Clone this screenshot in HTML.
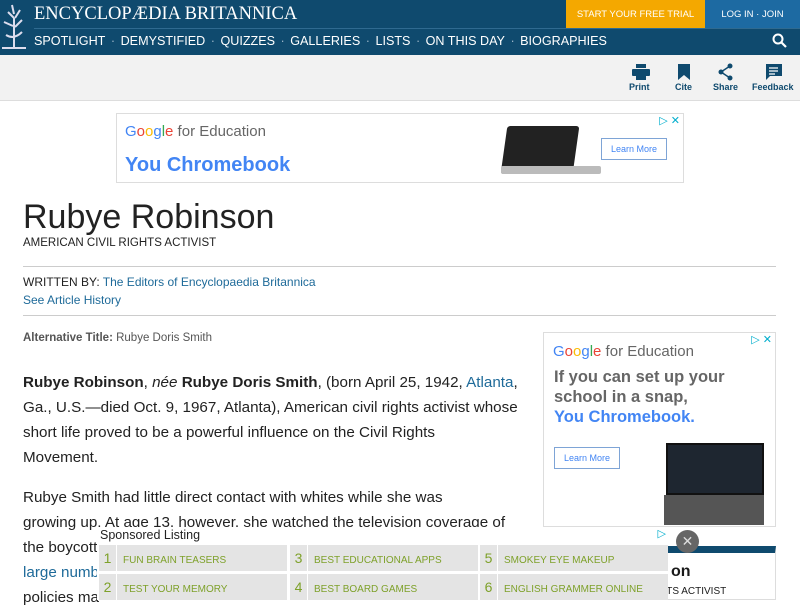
<!DOCTYPE html>
<html><head><meta charset="utf-8"><style>
*{margin:0;padding:0;box-sizing:border-box}
body{width:800px;height:600px;overflow:hidden;background:#fff;font-family:"Liberation Sans",sans-serif;position:relative;color:#1a1a1a}
.hdr{position:absolute;left:0;top:0;width:800px;height:55px;background:#0f4a6e}
.logo{position:absolute;left:34px;top:4px;color:#fff;font-family:"Liberation Serif",serif;font-size:18.5px;letter-spacing:0}
.trial{position:absolute;left:566px;top:0;width:139px;height:28px;background:#f4a800;color:#fff;font-size:9.5px;text-align:center;line-height:29px}
.login{position:absolute;left:705px;top:0;width:95px;height:28px;background:#1d6aa2;color:#fff;font-size:9.5px;text-align:center;line-height:29px}
.line{position:absolute;left:34px;top:28px;width:766px;height:1px;background:#2f6a90}
.nav{position:absolute;left:34px;top:34px;color:#fff;font-size:12.6px;white-space:nowrap}
.nav span{color:#9bb4c6;margin:0 5.5px}
.tool{position:absolute;left:0;top:55px;width:800px;height:46px;background:#f2f2f2;border-bottom:1px solid #ddd}
.ti{position:absolute;top:82px;font-size:9px;font-weight:bold;color:#0f4a6e;text-align:center}
.ad1{position:absolute;left:116px;top:113px;width:568px;height:70px;border:1px solid #ddd}
.g{font-size:15px;color:#666}
h1{position:absolute;left:23px;top:198px;font-size:34px;font-weight:normal;color:#222}
.sub{position:absolute;left:23px;top:237px;font-size:11.5px;color:#222}
.hr{position:absolute;left:23px;width:753px;height:1px;background:#ccc}
.p{position:absolute;left:23px;font-size:15.2px;line-height:25px;color:#222;white-space:nowrap;letter-spacing:0}
a{color:#1e6a99}
.ad2{position:absolute;left:543px;top:332px;width:233px;height:195px;border:1px solid #ddd;background:#fff}
.sp{position:absolute;left:97px;top:527px;width:571px;height:73px;background:#fff}
.cell{position:absolute;width:188px;height:26px;background:#e4e4e4;font-size:10px;color:#7ea12a;line-height:26px}
.cell i{font-style:normal;display:inline-block;width:18px;text-align:center;font-size:14px;border-right:1px solid #fff;margin-right:6px}
</style></head><body>
<div class="hdr">
<svg style="position:absolute;left:0;top:0" width="30" height="55"><path d="M12 5 L14 14 M8 12 L14 18 M20 10 L15 18 M4 22 L13 26 M22 20 L15 27 M14 18 L14 48 M6 35 Q14 40 22 32 M2 48 L26 48" stroke="#dde" stroke-width="2" fill="none"/></svg>
<div class="logo">ENCYCLOPÆDIA BRITANNICA</div>
<div class="trial">START YOUR FREE TRIAL</div>
<div class="login">LOG IN · JOIN</div>
<div class="line"></div>
<div class="nav">SPOTLIGHT<span>·</span>DEMYSTIFIED<span>·</span>QUIZZES<span>·</span>GALLERIES<span>·</span>LISTS<span>·</span>ON THIS DAY<span>·</span>BIOGRAPHIES</div>
<svg style="position:absolute;left:772px;top:33px" width="16" height="16"><circle cx="6" cy="6" r="4.5" stroke="#fff" stroke-width="2" fill="none"/><path d="M9.5 9.5 L14 14" stroke="#fff" stroke-width="2.2"/></svg>
</div>
<div class="tool"></div>
<svg style="position:absolute;left:632px;top:64px" width="18" height="16"><rect x="4" y="0" width="10" height="4" fill="#0f4a6e"/><rect x="0" y="5" width="18" height="7" rx="1" fill="#0f4a6e"/><rect x="4" y="10" width="10" height="6" fill="#0f4a6e"/></svg>
<div class="ti" style="left:629px">Print</div>
<svg style="position:absolute;left:678px;top:64px" width="12" height="16"><path d="M0 0H12V16L6 11L0 16Z" fill="#0f4a6e"/></svg>
<div class="ti" style="left:675px">Cite</div>
<svg style="position:absolute;left:718px;top:63px" width="16" height="18"><circle cx="12" cy="3" r="2.5" fill="#0f4a6e"/><circle cx="3" cy="9" r="2.5" fill="#0f4a6e"/><circle cx="12" cy="15" r="2.5" fill="#0f4a6e"/><path d="M12 3L3 9L12 15" stroke="#0f4a6e" stroke-width="1.5" fill="none"/></svg>
<div class="ti" style="left:713px">Share</div>
<svg style="position:absolute;left:766px;top:64px" width="16" height="16"><path d="M0 0H16V12H4L0 16Z" fill="#0f4a6e"/><path d="M3 4H12M3 7H12M3 10H9" stroke="#fff" stroke-width="1.2"/></svg>
<div class="ti" style="left:752px">Feedback</div>

<div class="ad1">
<div class="g" style="position:absolute;left:8px;top:9px"><span style="color:#4285f4">G</span><span style="color:#ea4335">o</span><span style="color:#fbbc05">o</span><span style="color:#4285f4">g</span><span style="color:#34a853">l</span><span style="color:#ea4335">e</span> for Education</div>
<div style="position:absolute;left:8px;top:40px;font-size:20px;font-weight:bold;color:#4285f4">You Chromebook</div>
<div style="position:absolute;left:387px;top:12px;width:72px;height:48px;background:#222;border-radius:3px;transform:skewX(-8deg)"></div>
<div style="position:absolute;left:384px;top:52px;width:100px;height:8px;background:#bbb;border-radius:2px"></div>
<div style="position:absolute;left:484px;top:24px;width:66px;height:22px;border:1px solid #7ea4d6;color:#4285f4;font-size:9px;text-align:center;line-height:20px">Learn More</div>
<div style="position:absolute;right:3px;top:0;font-size:11px;color:#00aecd">▷ ✕</div>
</div>

<h1>Rubye Robinson</h1>
<div class="sub">AMERICAN CIVIL RIGHTS ACTIVIST</div>
<div class="hr" style="top:266px"></div>
<div style="position:absolute;left:23px;top:275px;font-size:12px;color:#222">WRITTEN BY: <span style="color:#1e6a99">The Editors of Encyclopaedia Britannica</span></div>
<div style="position:absolute;left:23px;top:293px;font-size:12px;color:#1e6a99">See Article History</div>
<div class="hr" style="top:315px"></div>
<div style="position:absolute;left:23px;top:332px;font-size:11.5px;color:#555"><b>Alternative Title:</b> Rubye Doris Smith</div>
<div class="p" style="top:370px"><b>Rubye Robinson</b>, <i>née</i> <b>Rubye Doris Smith</b>, (born April 25, 1942, <a>Atlanta</a>,<br>Ga., U.S.—died Oct. 9, 1967, Atlanta), American civil rights activist whose<br>short life proved to be a powerful influence on the Civil Rights<br>Movement.</div>
<div class="p" style="top:485px">Rubye Smith had little direct contact with whites while she was<br>growing up. At age 13, however, she watched the television coverage of<br>the boycott of<br><a>large number</a><br>policies ma</div>

<div class="ad2">
<div class="g" style="position:absolute;left:9px;top:10px"><span style="color:#4285f4">G</span><span style="color:#ea4335">o</span><span style="color:#fbbc05">o</span><span style="color:#4285f4">g</span><span style="color:#34a853">l</span><span style="color:#ea4335">e</span> for Education</div>
<div style="position:absolute;left:10px;top:34px;font-size:16.5px;font-weight:bold;color:#666;line-height:20px">If you can set up your<br>school in a snap,<br><span style="color:#4285f4">You Chromebook.</span></div>
<div style="position:absolute;left:10px;top:114px;width:66px;height:22px;border:1px solid #7ea4d6;color:#4285f4;font-size:9px;text-align:center;line-height:20px">Learn More</div>
<div style="position:absolute;left:122px;top:110px;width:98px;height:52px;background:#1e2630;border:2px solid #111"></div>
<div style="position:absolute;left:120px;top:162px;width:100px;height:30px;background:#555"></div>
<div style="position:absolute;right:3px;top:0;font-size:11px;color:#00aecd">▷ ✕</div>
</div>
<div style="position:absolute;left:543px;top:546px;width:233px;height:54px;border:1px solid #ddd;border-top:7px solid #0f4a6e;background:#fff">
<div style="position:absolute;left:127px;top:10px;font-size:16px;font-weight:bold">on</div>
<div style="position:absolute;left:115px;top:33px;font-size:10px">HTS ACTIVIST</div></div>

<div class="sp">
<div style="position:absolute;left:3px;top:1px;font-size:12.5px;color:#222">Sponsored Listing</div>
<div style="position:absolute;right:2px;top:0;font-size:11px;color:#00aecd">▷</div>
<div class="cell" style="left:2px;top:18px"><i>1</i>FUN BRAIN TEASERS</div>
<div class="cell" style="left:2px;top:47px"><i>2</i>TEST YOUR MEMORY</div>
<div class="cell" style="left:193px;top:18px"><i>3</i>BEST EDUCATIONAL APPS</div>
<div class="cell" style="left:193px;top:47px"><i>4</i>BEST BOARD GAMES</div>
<div class="cell" style="left:383px;top:18px"><i>5</i>SMOKEY EYE MAKEUP</div>
<div class="cell" style="left:383px;top:47px"><i>6</i>ENGLISH GRAMMER ONLINE</div>
</div>
<div style="position:absolute;left:676px;top:530px;width:23px;height:23px;border-radius:50%;background:#666;color:#ddd;font-size:14px;text-align:center;line-height:23px">✕</div>
</body></html>
